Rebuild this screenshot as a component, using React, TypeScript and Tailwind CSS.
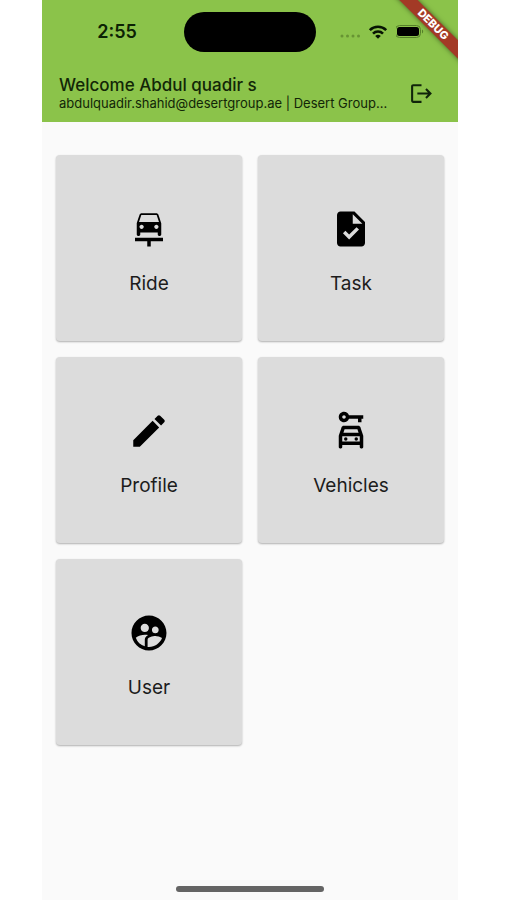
import React from "react";
import type { IconType } from "react-icons";
import {
  MdCarRepair,
  MdEdit,
  MdLogout,
  MdOutlineCarRental,
  MdSupervisedUserCircle,
  MdTask,
} from "react-icons/md";

const tiles: { label: string; Icon: IconType }[] = [
  { label: "Ride", Icon: MdCarRepair },
  { label: "Task", Icon: MdTask },
  { label: "Profile", Icon: MdEdit },
  { label: "Vehicles", Icon: MdOutlineCarRental },
  { label: "User", Icon: MdSupervisedUserCircle },
];

function StatusBar() {
  return (
    <div className="grid h-16 grid-cols-[1fr_132px_1fr] items-center">
      <span className="pl-2 text-center text-lg font-semibold text-[#0c2204]">2:55</span>
      <div className="h-10 rounded-full bg-black" />
      <div className="flex items-center gap-2 pl-6">
        <svg className="mt-2 h-1 w-5" viewBox="0 0 20 4" fill="#679433" aria-hidden="true">
          <circle cx="2" cy="2" r="1.5" />
          <circle cx="7.5" cy="2" r="1.5" />
          <circle cx="13" cy="2" r="1.5" />
          <circle cx="18.5" cy="2" r="1.5" />
        </svg>
        <svg className="h-4 w-5" viewBox="0 0 20 16" fill="none" stroke="#071403" strokeWidth="2.6" aria-hidden="true">
          <path d="M1.8 6.2a11.6 11.6 0 0 1 16.4 0" />
          <path d="M5 9.6a7.1 7.1 0 0 1 10 0" />
          <path d="M10 14.8l-2.8-2.8a4 4 0 0 1 5.6 0z" fill="#071403" stroke="none" />
        </svg>
        <svg className="h-4 w-8" viewBox="0 0 32 16" aria-hidden="true">
          <rect x="-0.5" y="1.5" width="25" height="12" rx="4" fill="none" stroke="#56802a" />
          <rect x="1" y="3" width="22" height="9" rx="2.5" fill="#000" />
          <path d="M26 5.5v4c1.6-.6 1.6-3.4 0-4z" fill="#56802a" />
        </svg>
      </div>
    </div>
  );
}

export default function App() {
  return (
    <div className="min-h-screen bg-white pr-[49px] pl-[42px] font-['Inter',sans-serif]">
      <div className="relative flex min-h-screen flex-col overflow-hidden bg-[#fafafa]">
        <header className="h-[122px] bg-[#8bc34a]">
          <StatusBar />
          <div className="flex items-center justify-between pt-3 pr-6 pl-[17px]">
            <div className="min-w-0 text-[#122607]">
              <h1 className="text-[17px] leading-[19px] font-medium">Welcome Abdul quadir s</h1>
              <p className="truncate text-[13px] leading-4">
                abdulquadir.shahid@desertgroup.ae | Desert Group...
              </p>
            </div>
            <button type="button" aria-label="Log out" className="shrink-0 text-[#10240a]">
              <MdLogout size={25} />
            </button>
          </div>
        </header>

        <div className="pointer-events-none absolute top-[18px] -right-[25px] flex h-[13px] w-[100px] rotate-45 items-center justify-center bg-[#a33a26] text-[11px] font-extrabold text-white shadow-[0_0_5px_rgba(0,0,0,0.5)]">
          DEBUG
        </div>

        <main className="grid grid-cols-2 gap-4 px-[14px] pt-[33px]">
          {tiles.map(({ label, Icon }) => (
            <button
              key={label}
              type="button"
              className="flex aspect-square flex-col items-center justify-center gap-[22px] rounded-[4px] bg-[#dcdcdc] pt-2 shadow-[0_1px_2px_rgba(0,0,0,0.3)]"
            >
              <Icon size={42} color="#000" />
              <span className="text-[19px] leading-6 text-[#1c1c1c]">{label}</span>
            </button>
          ))}
        </main>

        <div className="mx-auto mt-auto mb-2 h-[6px] w-[148px] rounded-full bg-[#646464]" />
      </div>
    </div>
  );
}
